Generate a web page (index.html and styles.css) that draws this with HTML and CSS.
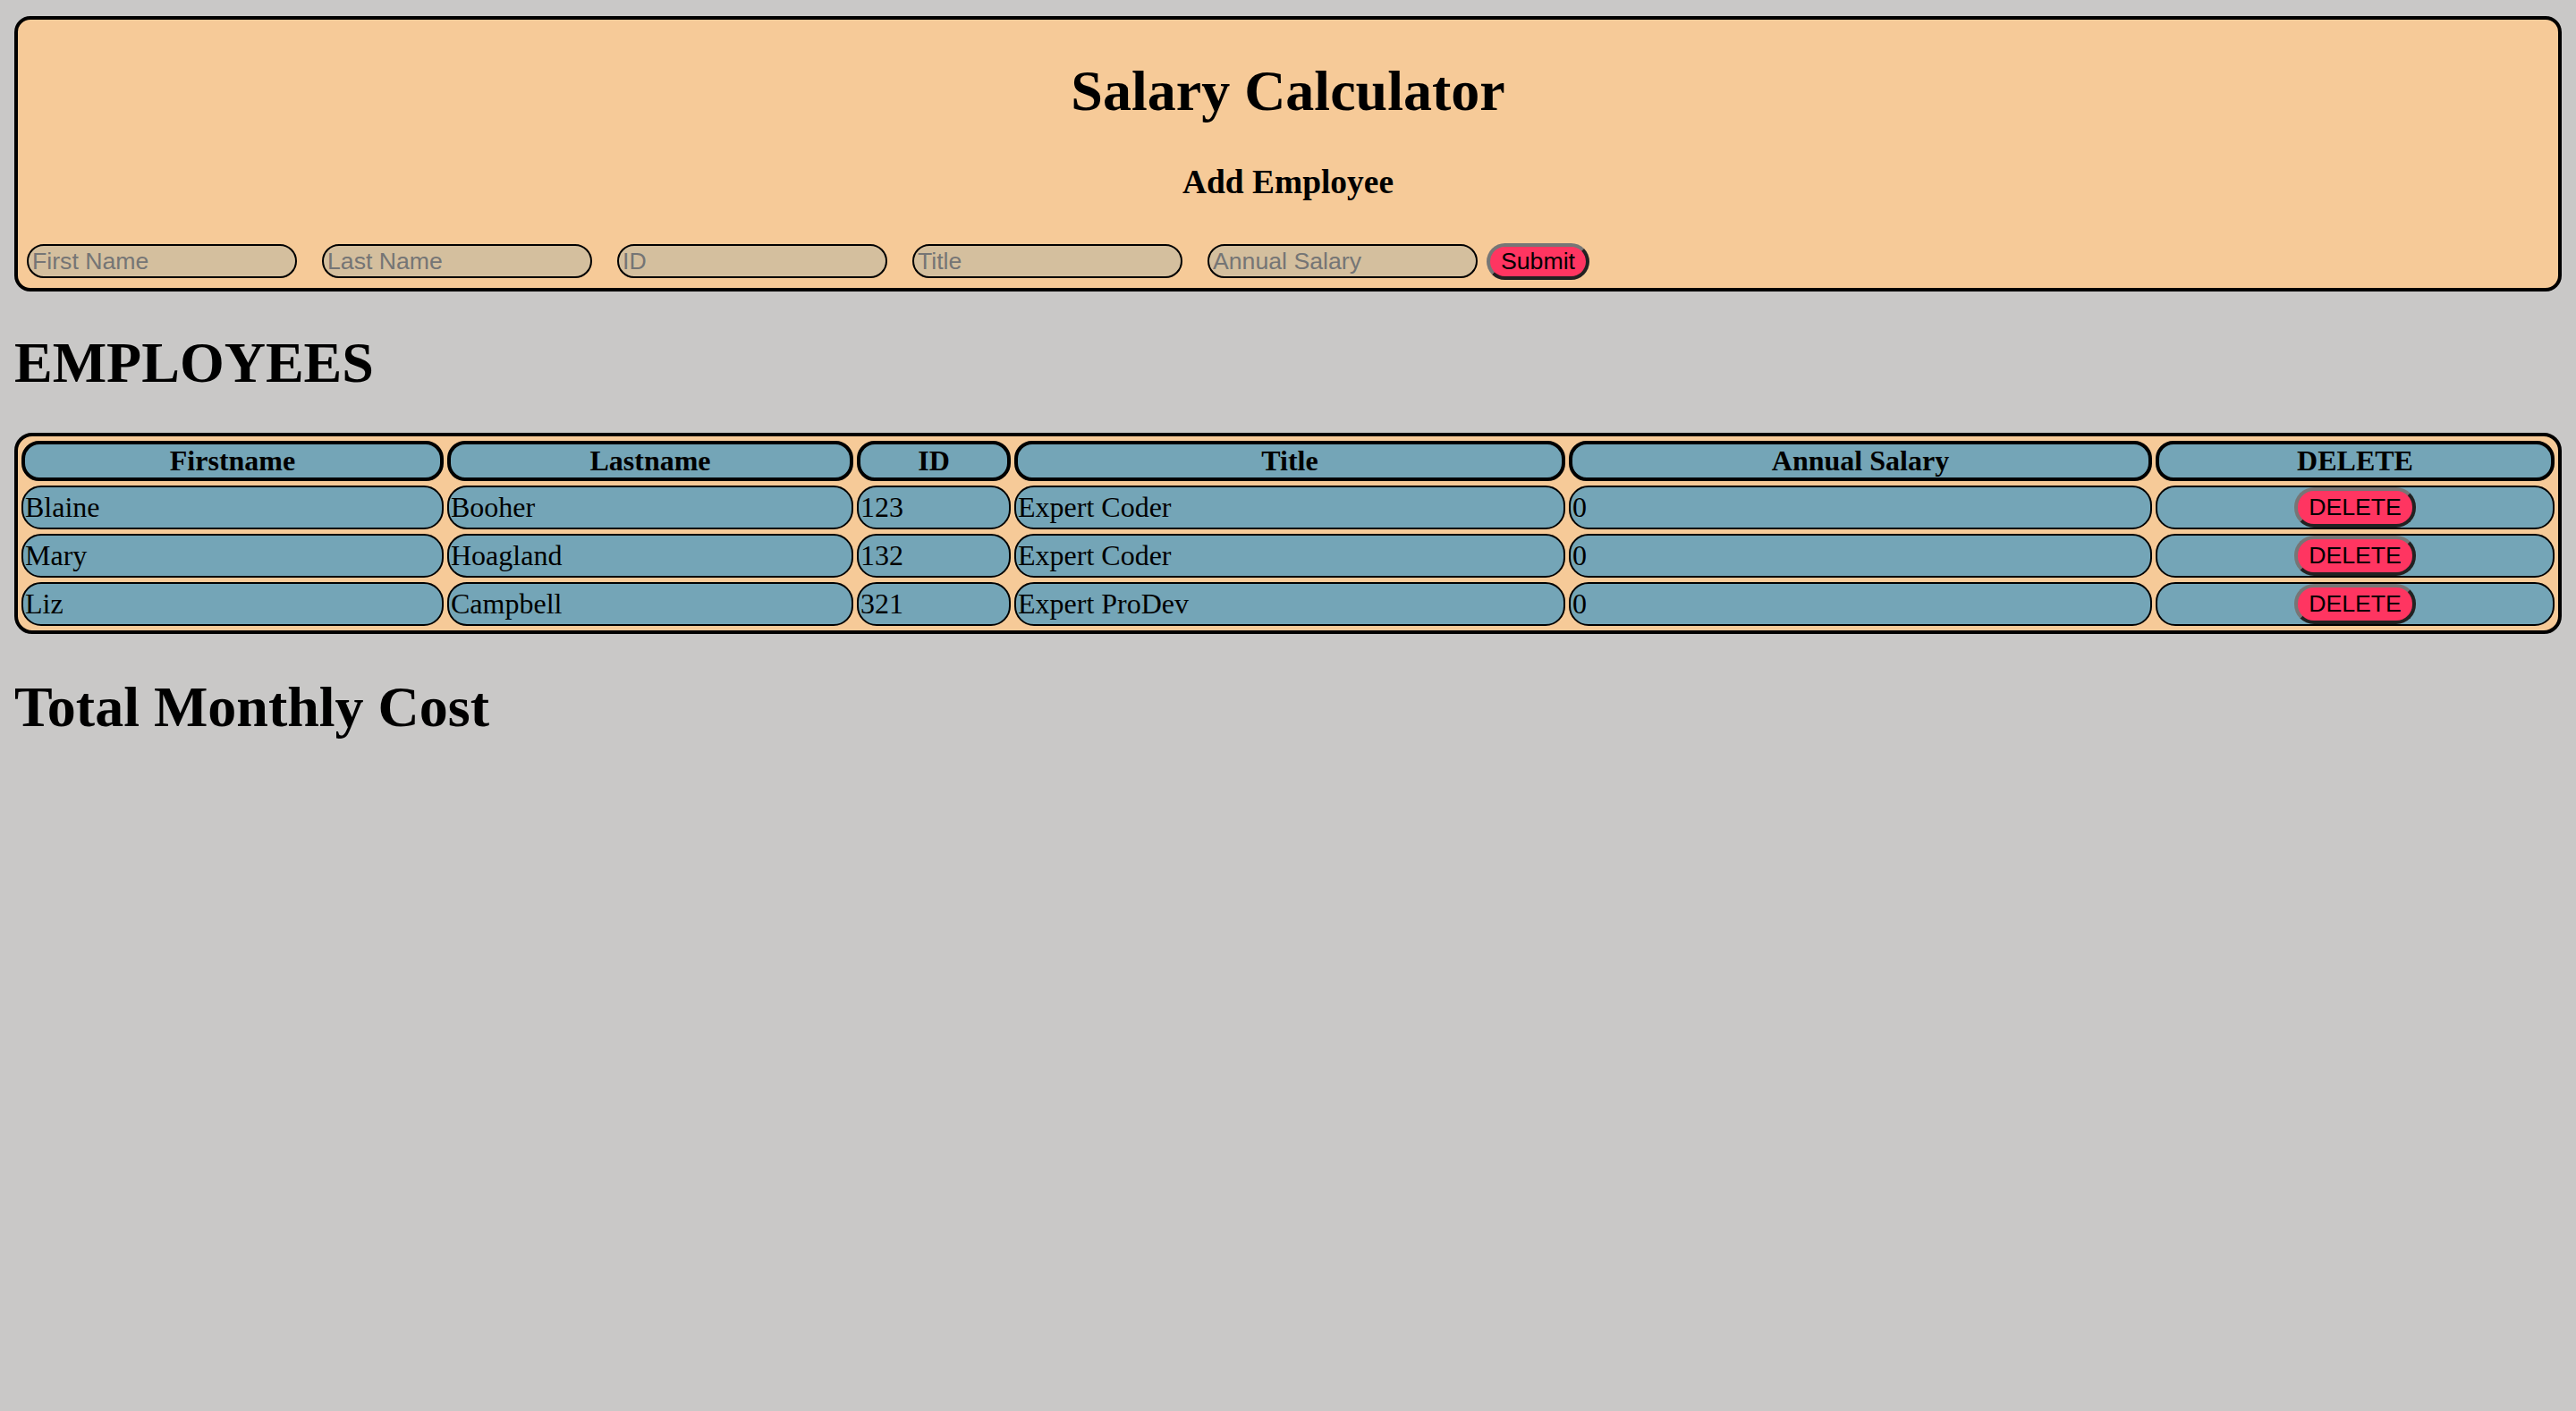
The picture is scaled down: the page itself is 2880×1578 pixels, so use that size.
FILE: index.html
```html
<!DOCTYPE html>
<html lang="en">
<head>
<meta charset="utf-8">
<title>Salary Calculator</title>
<link rel="stylesheet" href="styles.css">
</head>
<body>
<header class="panel">
  <h1 class="title">Salary Calculator</h1>
  <h3 class="subtitle">Add Employee</h3>
  <form class="form-row">
    <input class="field" type="text" placeholder="First Name">
    <input class="field" type="text" placeholder="Last Name">
    <input class="field" type="text" placeholder="ID">
    <input class="field" type="text" placeholder="Title">
    <input class="field field-last" type="text" placeholder="Annual Salary">
    <button class="btn btn-submit" type="button">Submit</button>
  </form>
</header>
<h1 class="section-title section-employees">EMPLOYEES</h1>
<table class="employees">
  <thead>
    <tr>
      <th class="c-first">Firstname</th>
      <th class="c-last">Lastname</th>
      <th class="c-id">ID</th>
      <th class="c-title">Title</th>
      <th class="c-salary">Annual Salary</th>
      <th class="c-delete">DELETE</th>
    </tr>
  </thead>
  <tbody>
    <tr>
      <td>Blaine</td>
      <td>Booher</td>
      <td>123</td>
      <td>Expert Coder</td>
      <td>0</td>
      <td class="actions"><button class="btn btn-delete" type="button">DELETE</button></td>
    </tr>
    <tr>
      <td>Mary</td>
      <td>Hoagland</td>
      <td>132</td>
      <td>Expert Coder</td>
      <td>0</td>
      <td class="actions"><button class="btn btn-delete" type="button">DELETE</button></td>
    </tr>
    <tr>
      <td>Liz</td>
      <td>Campbell</td>
      <td>321</td>
      <td>Expert ProDev</td>
      <td>0</td>
      <td class="actions"><button class="btn btn-delete" type="button">DELETE</button></td>
    </tr>
  </tbody>
</table>
<h1 class="section-title section-total">Total Monthly Cost</h1>
</body>
</html>
```
FILE: styles.css
```css
html {
  background: #c9c8c7;
}

body {
  margin: 18px 16px 16px;
  background: #c9c8c7;
  color: #000;
  font-family: "Liberation Serif", "Times New Roman", serif;
  font-size: 32px;
}

.panel {
  border: 4px solid #000;
  border-radius: 18px;
  background: #f6ca98;
  padding: 0 10px 9px;
}

.title {
  margin: 42.88px 0;
  font-size: 64px;
  font-weight: bold;
  text-align: center;
}

.subtitle {
  margin: 37.44px 0 47px;
  font-size: 37.44px;
  font-weight: bold;
  text-align: center;
}

.form-row {
  display: flex;
  align-items: center;
  margin: 0;
}

.field {
  box-sizing: border-box;
  width: 302px;
  height: 38px;
  margin: 0 28px 0 0;
  padding: 0 4px;
  border: 2px solid #000;
  border-radius: 19px;
  background: #d4bf9e;
  color: #000;
  font-family: "Liberation Sans", Arial, sans-serif;
  font-size: 26.67px;
  outline: none;
}

.field::placeholder {
  color: #757575;
}

.field-last {
  margin-right: 10px;
}

.btn {
  border: 4px solid;
  border-color: #767676 #222 #222 #767676;
  border-radius: 22px;
  background: #ff3561;
  color: #000;
  font-family: "Liberation Sans", Arial, sans-serif;
  font-size: 26.67px;
  line-height: normal;
  margin: 0;
}

.btn-submit {
  padding: 1px 12px;
}

.btn-delete {
  padding: 3px 12px;
}

.section-title {
  margin: 42.88px 0;
  font-size: 64px;
  font-weight: bold;
}

.section-employees {
  margin-bottom: 41px;
}

.section-total {
  margin-top: 44.88px;
}

.employees {
  width: 100%;
  table-layout: fixed;
  border: 4px solid #000;
  border-radius: 20px;
  border-collapse: separate;
  border-spacing: 4px 5px;
  background: #f6ca98;
}

.employees th,
.employees td {
  box-sizing: border-box;
  background: #74a5b7;
  vertical-align: middle;
}

.employees th {
  height: 45px;
  padding: 0;
  border: 4px solid #000;
  border-radius: 20px;
  font-size: 32px;
  font-weight: bold;
  text-align: center;
}

.employees td {
  height: 49px;
  padding: 0 2px;
  border: 2px solid #000;
  border-radius: 22px;
  font-size: 32px;
  text-align: left;
}

.employees td.actions {
  padding: 0;
  text-align: center;
}

.c-first { width: 472px; }
.c-last { width: 454px; }
.c-id { width: 172px; }
.c-title { width: 616px; }
.c-salary { width: 652px; }
.c-delete { width: 446px; }
```
